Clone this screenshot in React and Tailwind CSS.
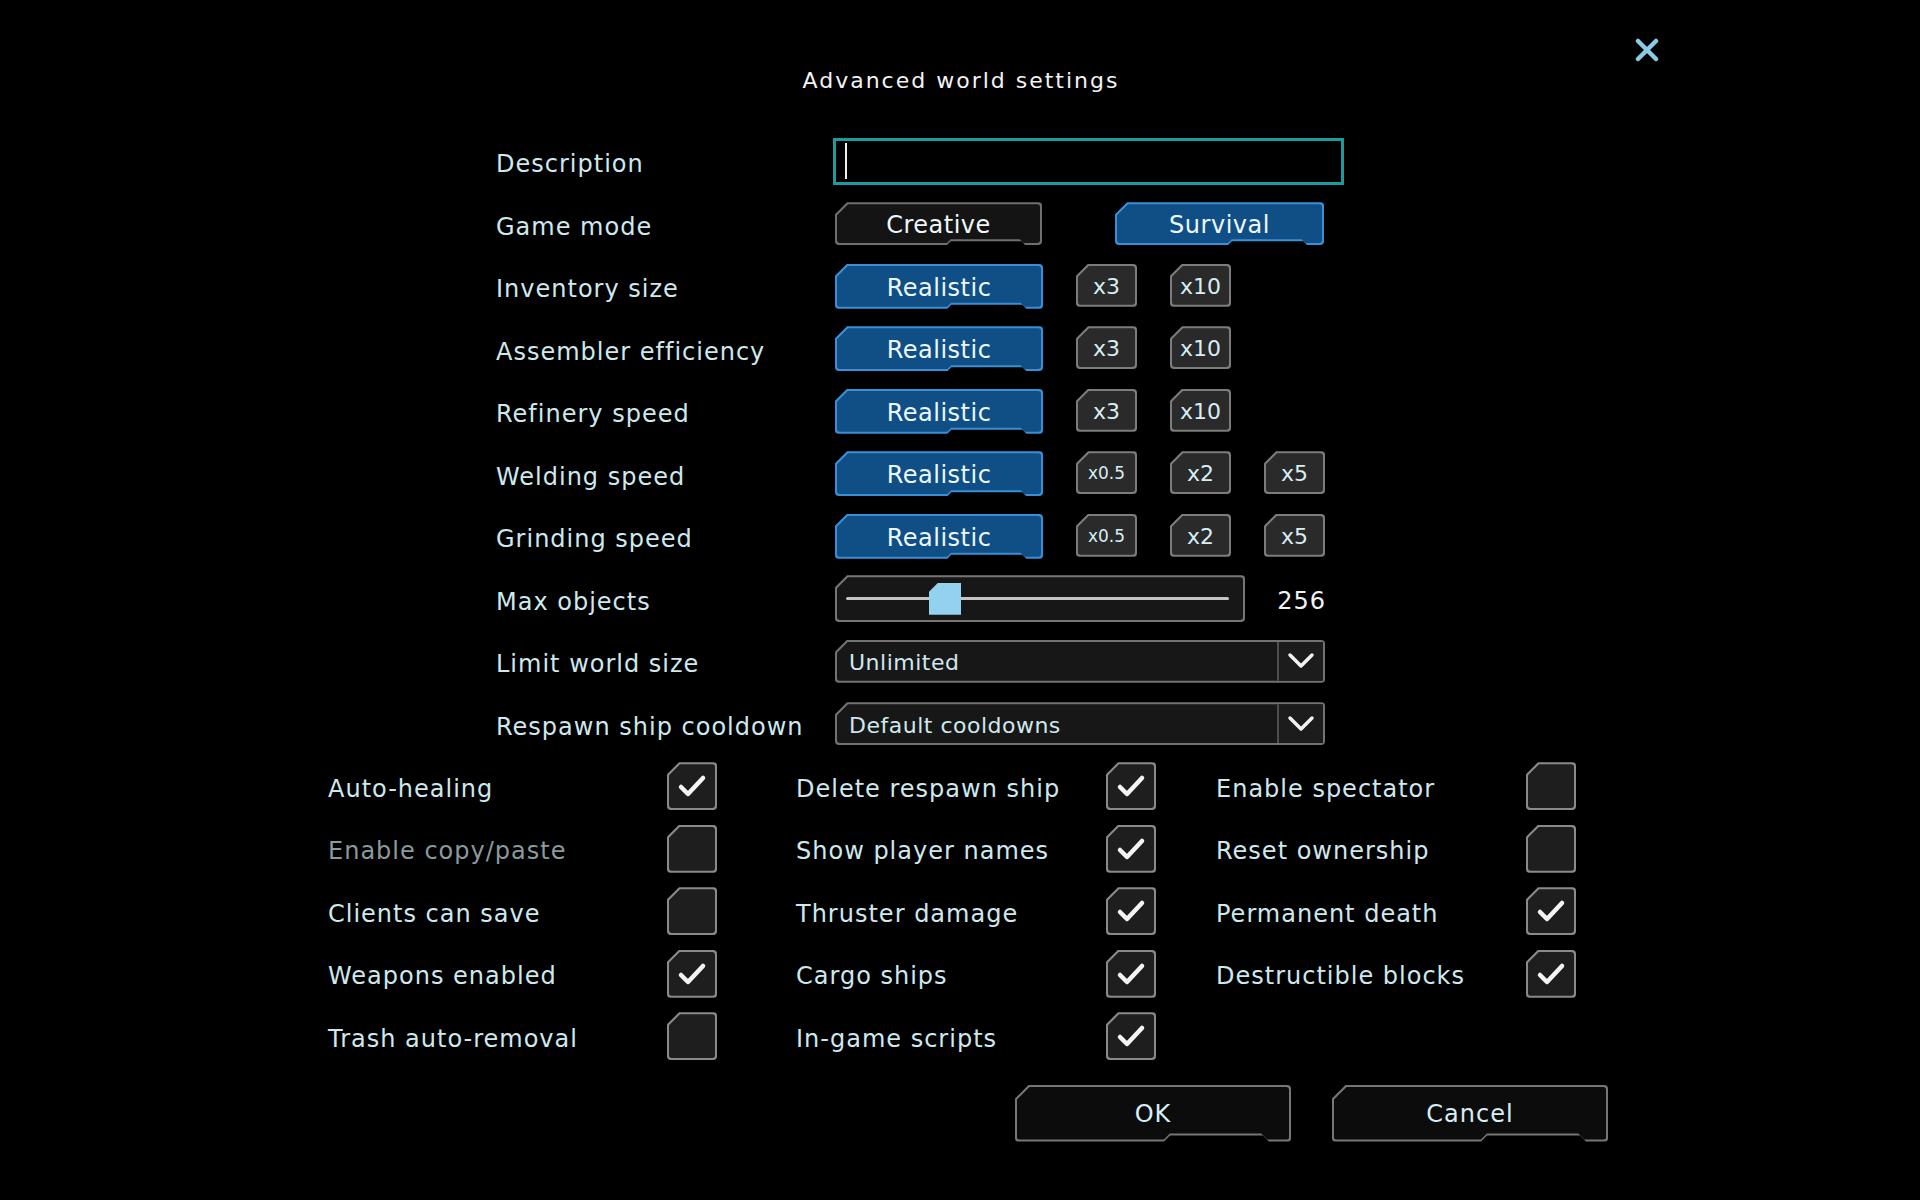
import React from 'react';

// chamfered frame shapes (outer = border layer, inner = fill layer)
const SHAPES = {
  cut: {
    o: '[clip-path:polygon(12px_0,100%_0,100%_100%,0_100%,0_12px)]',
    i: '[clip-path:polygon(11px_0,100%_0,100%_100%,0_100%,0_11px)]',
  },
  notch: {
    o: '[clip-path:polygon(12px_0,100%_0,100%_100%,92%_100%,calc(92%_-_4px)_calc(100%_-_4px),calc(54%_+_4px)_calc(100%_-_4px),54%_100%,0_100%,0_12px)]',
    i: '[clip-path:polygon(11px_0,100%_0,100%_100%,92%_100%,calc(92%_-_4px)_calc(100%_-_4px),calc(54%_+_4px)_calc(100%_-_4px),54%_100%,0_100%,0_11px)]',
  },
  notchLg: {
    o: '[clip-path:polygon(14px_0,100%_0,100%_100%,92%_100%,calc(92%_-_6px)_calc(100%_-_6px),calc(54%_+_6px)_calc(100%_-_6px),54%_100%,0_100%,0_14px)]',
    i: '[clip-path:polygon(13px_0,100%_0,100%_100%,92%_100%,calc(92%_-_6px)_calc(100%_-_6px),calc(54%_+_6px)_calc(100%_-_6px),54%_100%,0_100%,0_13px)]',
  },
};

const Shape = ({ shape = 'cut', border, fill, className = '', innerClassName = 'items-center justify-center', children }) => (
  <div className={`${SHAPES[shape].o} ${border} ${className} p-[2px] rounded-[4px] flex shrink-0`}>
    <div className={`${SHAPES[shape].i} ${fill} flex-1 rounded-[3px] flex ${innerClassName}`}>
      {children}
    </div>
  </div>
);

const BlueBtn = ({ children, className = 'w-[208px] h-[45px]' }) => (
  <Shape shape="notch" border="bg-[#3b8fd4]" fill="bg-[#0f4f86]" className={className}>
    <span className="pt-[3px] text-[24px] tracking-[0.5px] text-[#eef8fc]">{children}</span>
  </Shape>
);

const DarkBtn = ({ children }) => (
  <Shape shape="notch" border="bg-[#6f6f6f]" fill="bg-[#141414]" className="w-[207px] h-[43px]">
    <span className="pt-[2px] text-[24px] tracking-[0.5px] text-[#eef8fc]">{children}</span>
  </Shape>
);

const SmallBtn = ({ children }) => (
  <Shape border="bg-[#7c7c7c]" fill="bg-[#2a2a2a]" className="w-[61px] h-[43px]">
    <span className={`pt-[2px] ${children.length > 3 ? 'text-[17px]' : 'text-[22px]'} text-[#d6eef4]`}>{children}</span>
  </Shape>
);

const Checkbox = ({ checked }) => (
  <Shape border="bg-[#8a8a8a]" fill="bg-[#1e1e1e]" className="w-[50px] h-[48px]">
    {checked && (
      <svg width="30" height="24" viewBox="0 0 30 24">
        <polyline points="4,13 11,20 26,4" fill="none" stroke="#f4f4f4" strokeWidth="4.5" strokeLinecap="round" strokeLinejoin="round" />
      </svg>
    )}
  </Shape>
);

const Chevron = () => (
  <svg width="28" height="18" viewBox="0 0 28 18">
    <polyline points="3,3 14,14 25,3" fill="none" stroke="#f2f2f2" strokeWidth="3.5" strokeLinecap="round" strokeLinejoin="round" />
  </svg>
);

const Dropdown = ({ value }) => (
  <Shape border="bg-[#727272]" fill="bg-[#171717]" className="w-[490px] h-[43px]" innerClassName="items-stretch">
    <div className="flex-1 flex items-center pl-[12px] pt-[3px] text-[22px] tracking-[0.5px] text-[#cfe8ee]">{value}</div>
    <div className="w-[46px] border-l-2 border-[#4e4e4e] bg-[#1c1c1c] flex items-center justify-center">
      <Chevron />
    </div>
  </Shape>
);

const Row = ({ label, children }) => (
  <div className="flex items-center h-[62.5px]">
    <div className="w-[339px] pt-[6px] text-[24px] tracking-[1px] text-[#cfe8ee]">{label}</div>
    <div className="flex items-center">{children}</div>
  </div>
);

const checkboxes = [
  [
    ['Auto-healing', true],
    ['Enable copy/paste', false, true],
    ['Clients can save', false],
    ['Weapons enabled', true],
    ['Trash auto-removal', false],
  ],
  [
    ['Delete respawn ship', true],
    ['Show player names', true],
    ['Thruster damage', true],
    ['Cargo ships', true],
    ['In-game scripts', true],
  ],
  [
    ['Enable spectator', false],
    ['Reset ownership', false],
    ['Permanent death', true],
    ['Destructible blocks', true],
  ],
];

export default function App() {
  return (
    <div className="w-[1920px] h-[1200px] bg-black relative font-['DejaVu_Sans',sans-serif] overflow-hidden">
      {/* close */}
      <button className="absolute left-[1635px] top-[38px] w-[24px] h-[24px]">
        <svg width="24" height="24" viewBox="0 0 24 24">
          <path d="M3 3 L21 21 M21 3 L3 21" stroke="#8ccbe8" strokeWidth="4.5" strokeLinecap="round" />
        </svg>
      </button>

      <div className="h-[130px] pt-[66px]">
        <h1 className="text-center text-[22px] leading-[30px] tracking-[2px] text-[#f2f4f4] pl-[2px]">Advanced world settings</h1>
      </div>

      <div className="ml-[496px]">
        <Row label="Description">
          <div className="-ml-[2px] w-[511px] h-[47px] border-[3px] border-[#1b9b9b] bg-black flex items-center pl-[9px]">
            <div className="w-[2px] h-[36px] bg-[#f0f0f0]" />
          </div>
        </Row>
        <Row label="Game mode">
          <div className="flex gap-[73px]">
            <DarkBtn>Creative</DarkBtn>
            <BlueBtn className="w-[209px] h-[43px]">Survival</BlueBtn>
          </div>
        </Row>
        {[
          ['Inventory size', ['x3', 'x10']],
          ['Assembler efficiency', ['x3', 'x10']],
          ['Refinery speed', ['x3', 'x10']],
          ['Welding speed', ['x0.5', 'x2', 'x5']],
          ['Grinding speed', ['x0.5', 'x2', 'x5']],
        ].map(([label, opts]) => (
          <Row key={label} label={label}>
            <div className="flex gap-[33px]">
              <BlueBtn>Realistic</BlueBtn>
              {opts.map((o) => (
                <SmallBtn key={o}>{o}</SmallBtn>
              ))}
            </div>
          </Row>
        ))}
        <Row label="Max objects">
          <Shape border="bg-[#767676]" fill="bg-[#171717]" className="w-[410px] h-[47px]" innerClassName="items-center pl-[9px] pr-[14px]">
            <div className="relative flex-1 h-[3px] bg-[#c4c4c4] rounded-full">
              <div className="absolute left-[83px] top-1/2 -translate-y-1/2 w-[32px] h-[32px] bg-[#93d1ef] [clip-path:polygon(9px_0,100%_0,100%_100%,0_100%,0_9px)]" />
            </div>
          </Shape>
          <div className="w-[81px] pt-[4px] text-right text-[24px] tracking-[1px] text-[#f0f4f4]">256</div>
        </Row>
        <Row label="Limit world size">
          <Dropdown value="Unlimited" />
        </Row>
        <Row label="Respawn ship cooldown">
          <Dropdown value="Default cooldowns" />
        </Row>
      </div>

      <div className="ml-[328px] grid grid-cols-[468px_420px_361px]">
        {checkboxes.map((col, ci) => (
          <div key={ci} className="flex flex-col">
            {col.map(([label, checked, disabled]) => (
              <div key={label} className="flex items-center h-[62.5px]">
                <div
                  className={`${ci === 0 ? 'w-[339px]' : 'w-[310px]'} pt-[5px] text-[24px] tracking-[1px] ${
                    disabled ? 'text-[#8b9a9e]' : 'text-[#cfe8ee]'
                  }`}
                >
                  {label}
                </div>
                <Checkbox checked={checked} />
              </div>
            ))}
          </div>
        ))}
      </div>

      <div className="ml-[1015px] mt-[17px] flex gap-[41px]">
        <Shape shape="notchLg" border="bg-[#767676]" fill="bg-[#0c0c0c]" className="w-[276px] h-[57px]">
          <span className="pt-[2px] text-[24px] tracking-[1px] text-[#d6eef4]">OK</span>
        </Shape>
        <Shape shape="notchLg" border="bg-[#767676]" fill="bg-[#0c0c0c]" className="w-[276px] h-[57px]">
          <span className="pt-[2px] text-[24px] tracking-[1px] text-[#d6eef4]">Cancel</span>
        </Shape>
      </div>
    </div>
  );
}
